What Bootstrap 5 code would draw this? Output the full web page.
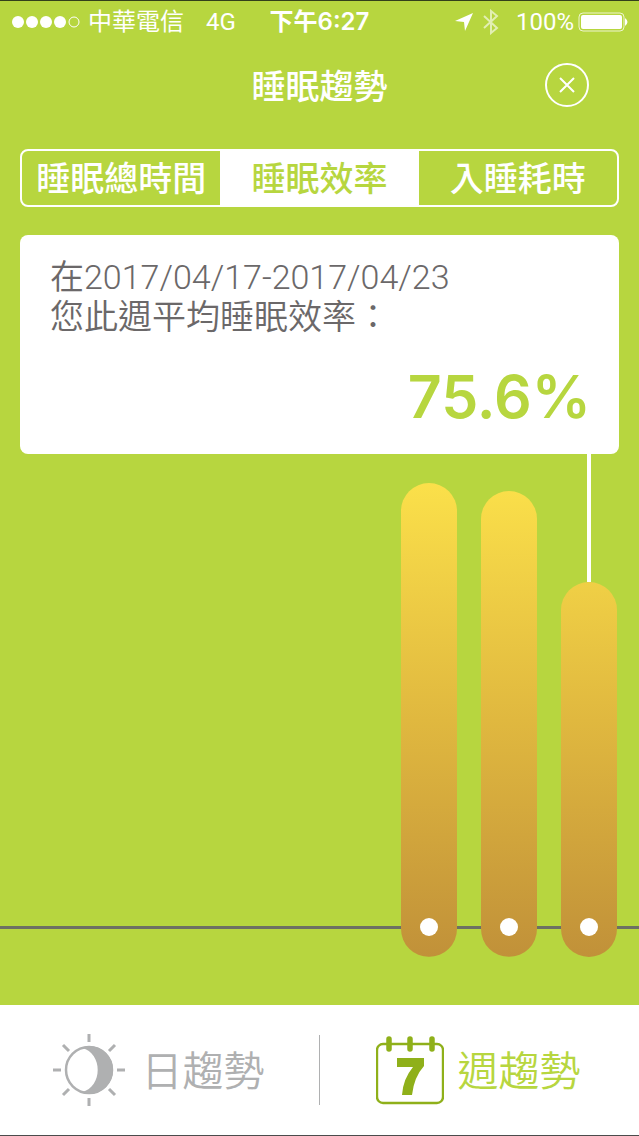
<!DOCTYPE html>
<html lang="zh-Hant">
<head>
<meta charset="utf-8">
<meta name="viewport" content="width=device-width, initial-scale=1">
<title>睡眠趨勢</title>
<link href="https://cdn.jsdelivr.net/npm/bootstrap@5.3.0/dist/css/bootstrap.min.css" rel="stylesheet">
<style>
  :root { --lime: #b7d63f; --leaf: #8fb01a; --ash: #afb0b1; }
  body { background: var(--lime); font-family: Inter, "Noto Sans CJK TC", sans-serif; }
  .app { border-top: 1px solid #33401a; border-bottom: 1px solid #4b4b4b; }
  .status { height: 42px; padding: 0 11px 0 12px; font-size: 24px; line-height: 42px; font-family: Roboto, "Noto Sans CJK TC", sans-serif; }
  .status time { font-family: Inter, "Noto Sans CJK TC", sans-serif; font-size: 24px; font-weight: 600; white-space: nowrap; }
  .carrier { margin-left: 7px; }
  .network { margin-left: 22px; }
  .titlebar { height: 84px; }
  .titlebar h1 { font-size: 34px; line-height: 40px; font-weight: 500; padding-top: 3px; }
  .close-btn { right: 50px; top: 20px; }
  .tabs { margin: 22px 20px 0; height: 58px; border: 2px solid #fff; border-radius: 8px; overflow: hidden; }
  .tabs button { flex: 1 1 0; border: 0; padding: 2px 0 0; background: transparent; color: #fff; font-size: 34px; line-height: 52px; font-weight: 500; white-space: nowrap; }
  .tabs button.active { background: #fff; color: var(--lime); }
  .summary { margin: 28px 20px 0; padding: 22px 28px 25px 30px; border-radius: 8px; background: #fff; color: #6b6869; }
  .summary p { font-family: Roboto, "Noto Sans CJK TC", sans-serif; font-size: 34px; line-height: 40px; font-weight: 350; }
  .summary output { color: var(--lime); font-size: 59px; line-height: 64px; font-weight: 600; margin-top: 28px; }
  .chart { padding: 0 22px 48px; }
  .chart::before { content: ""; position: absolute; left: 0; right: 0; bottom: 76px; height: 3px; background: #6d7063; }
  .plot { gap: 24px; }
  .track { width: 56px; }
  .stem { width: 4px; background: #fff; }
  .pill { width: 56px; border-radius: 28px; padding-bottom: 21px; background: linear-gradient(#fbe04a, #e0b83f 50%, #c19139) bottom / 100% 474px no-repeat; }
  .pill i { width: 18px; height: 18px; border-radius: 50%; background: #fff; }
  .switcher { height: 130px; background: #fff; }
  .switcher a { flex: 1 1 0; font-size: 41px; line-height: 60px; font-weight: 350; text-decoration: none; color: var(--ash); gap: 16px; padding-right: 3px; }
  .switcher a.active { color: var(--lime); gap: 14px; }
  .switcher span { padding-top: 2px; }
  .rule { width: 1px; height: 70px; background: var(--ash); }
</style>
</head>
<body>
<div class="app min-vh-100 d-flex flex-column">
  <header class="text-white">
    <div class="status d-flex align-items-center justify-content-between position-relative">
      <div class="d-flex align-items-center">
        <svg width="69" height="14" viewBox="0 0 69 14" fill="#fff" role="img" aria-label="訊號">
          <circle cx="6" cy="7" r="6"/><circle cx="20" cy="7" r="6"/><circle cx="34" cy="7" r="6"/><circle cx="48" cy="7" r="6"/>
          <circle cx="62" cy="7" r="5" fill="none" stroke="#fff"/>
        </svg>
        <span class="carrier">中華電信</span><span class="network">4G</span>
      </div>
      <time class="position-absolute start-50 translate-middle-x">下午6:27</time>
      <div class="d-flex align-items-center">
        <svg width="20" height="20" viewBox="0 0 20 20" fill="#fff" aria-hidden="true"><path d="M19 1 1 9l9 1 1 9z"/></svg>
        <svg class="ms-2 me-3" width="18" height="26" viewBox="0 0 18 26" fill="none" stroke="#fff" stroke-opacity=".6" stroke-width="2" aria-hidden="true"><path d="m2 7 13 12-6 5V2l6 5L2 19"/></svg>
        <span>100%</span>
        <svg class="ms-1" width="50" height="20" viewBox="0 0 50 20" role="img" aria-label="電量">
          <rect x="1" y="1" width="45" height="18" rx="4" fill="none" stroke="#fff" stroke-opacity=".75"/>
          <rect x="3" y="3" width="41" height="14" rx="2" fill="#fff"/><path d="M47 6q5 4 0 8z" fill="#fff"/>
        </svg>
      </div>
    </div>
    <div class="titlebar d-flex align-items-center justify-content-center position-relative">
      <h1 class="m-0">睡眠趨勢</h1>
      <button type="button" class="close-btn btn p-0 border-0 position-absolute lh-1" aria-label="關閉">
        <svg class="d-block" width="44" height="44" viewBox="0 0 44 44" fill="none" stroke="#fff" stroke-width="2"><circle cx="22" cy="22" r="21"/><path d="m15 15 14 14M29 15 15 29"/></svg>
      </button>
    </div>
  </header>

  <nav class="tabs d-flex" aria-label="指標">
    <button type="button">睡眠總時間</button>
    <button type="button" class="active" aria-current="true">睡眠效率</button>
    <button type="button">入睡耗時</button>
  </nav>

  <section class="summary d-flex flex-column">
    <p class="m-0">在2017/04/17-2017/04/23<br>您此週平均睡眠效率：</p>
    <output class="text-end">75.6%</output>
  </section>

  <main class="chart flex-grow-1 d-flex flex-column position-relative">
    <div class="plot flex-grow-1 d-flex justify-content-end position-relative">
      <div class="track d-flex flex-column justify-content-end align-items-center"><div class="pill d-flex align-items-end justify-content-center" style="height:94.2%"><i></i></div></div>
      <div class="track d-flex flex-column justify-content-end align-items-center"><div class="pill d-flex align-items-end justify-content-center" style="height:92.6%"><i></i></div></div>
      <div class="track d-flex flex-column justify-content-end align-items-center"><div class="stem flex-grow-1"></div><div class="pill d-flex align-items-end justify-content-center" style="height:74.6%"><i></i></div></div>
    </div>
  </main>

  <nav class="switcher d-flex align-items-center" aria-label="趨勢">
    <a href="#day" class="d-flex align-items-center justify-content-center">
      <svg width="74" height="74" viewBox="0 0 74 74" fill="none" stroke="#afb0b1" aria-hidden="true">
        <circle cx="37" cy="37" r="23" stroke-width="2.5"/>
        <path d="M30 15Q33 13 37 13a24 24 0 0 1 0 48Q33 61 30 59C51 54 51 20 30 15z" fill="#afb0b1" stroke="none"/>
        <path stroke-width="3" d="M37 1v8M37 65v8M1 37h8M65 37h8M11 12l6 6M57 56l6 6M63 12l-6 6M17 56l-6 6"/>
      </svg>
      <span>日趨勢</span>
    </a>
    <div class="rule"></div>
    <a href="#week" class="active d-flex align-items-center justify-content-center" aria-current="page">
      <svg width="68" height="70" viewBox="0 0 68 70" aria-hidden="true">
        <rect x="1" y="9" width="66" height="59" rx="6" fill="none" stroke="#8fb01a" stroke-width="2.4"/>
        <path d="M13 4v10M34 4v10M56 4v10" stroke="#8fb01a" stroke-width="5.5" stroke-linecap="round"/>
        <path d="M21 23h27v8Q38 42 36 60H26Q27 44 37 32H21z" fill="#8fb01a"/>
      </svg>
      <span>週趨勢</span>
    </a>
  </nav>
</div>
<script src="https://cdn.jsdelivr.net/npm/bootstrap@5.3.0/dist/js/bootstrap.bundle.min.js"></script>
</body>
</html>
